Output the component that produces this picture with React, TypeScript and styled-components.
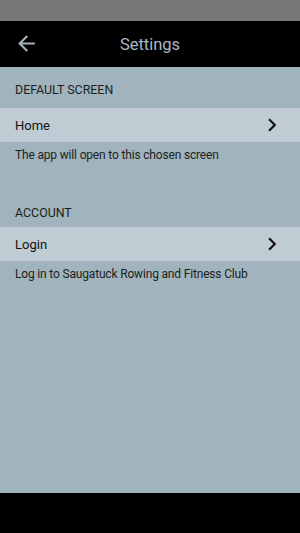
import React from "react";
import styled, { createGlobalStyle } from "styled-components";

const Global = createGlobalStyle`
  html, body { margin: 0; padding: 0; }
  body { font-family: Roboto, "Noto Sans", sans-serif; }
  * { box-sizing: border-box; }
`;

const Screen = styled.div`
  display: flex;
  flex-direction: column;
  height: 533px;
  width: 300px;
  background: #a1b3bc;
`;

const StatusBar = styled.div`
  height: 21px;
  background: #777777;
  flex-shrink: 0;
`;

const Header = styled.header`
  height: 46px;
  background: #000;
  display: flex;
  align-items: center;
  position: relative;
  flex-shrink: 0;
`;

const BackButton = styled.button`
  background: none;
  border: none;
  padding: 0;
  margin-left: 14px;
  margin-top: -2px;
  width: 25px;
  height: 25px;
  display: flex;
  align-items: center;
  justify-content: center;
  cursor: pointer;
  position: relative;
  z-index: 1;
`;

const Title = styled.h1`
  position: absolute;
  left: 0;
  right: 0;
  text-align: center;
  margin: 0;
  font-size: 16.5px;
  font-weight: 400;
  color: #a9b9c2;
  pointer-events: none;
`;

const Content = styled.main`
  flex: 1;
  display: flex;
  flex-direction: column;
`;

const SectionHeader = styled.div<{ $bottom: number }>`
  padding: 16px 15px ${(p) => p.$bottom}px;
  line-height: 14px;
  font-size: 12.4px;
  color: #1c1f21;
`;

const Row = styled.div`
  height: 34px;
  background: #bfccd3;
  display: flex;
  align-items: center;
  justify-content: space-between;
  padding: 0 15px 0 15px;
  font-size: 13px;
  color: #111;
`;

const Description = styled.div<{ $height: number }>`
  height: ${(p) => p.$height}px;
  padding: 5px 15px 0;
  font-size: 12px;
  letter-spacing: -0.17px;
  line-height: 16px;
  color: #1c1f21;
`;

const BottomBar = styled.div`
  height: 40px;
  background: #000;
  flex-shrink: 0;
`;

const Chevron = () => (
  <svg width="26" height="26" viewBox="0 0 24 24">
    <path d="M10 6L8.59 7.41 13.17 12l-4.58 4.59L10 18l6-6z" fill="#111" />
  </svg>
);

const BackArrow = () => (
  <svg width="25" height="25" viewBox="0 0 24 24">
    <path
      d="M20 11H7.83l5.59-5.59L12 4l-8 8 8 8 1.41-1.41L7.83 13H20v-2z"
      fill="#a1b3bc"
    />
  </svg>
);

const sections = [
  { title: "DEFAULT SCREEN", value: "Home", desc: "The app will open to this chosen screen", bottom: 11, descHeight: 47.5 },
  { title: "ACCOUNT", value: "Login", desc: "Log in to Saugatuck Rowing and Fitness Club", bottom: 7.5, descHeight: 44 },
];

export default function App() {
  return (
    <>
      <Global />
      <Screen>
        <StatusBar />
        <Header>
          <BackButton aria-label="Back">
            <BackArrow />
          </BackButton>
          <Title>Settings</Title>
        </Header>
        <Content>
          {sections.map((s) => (
            <section key={s.title}>
              <SectionHeader $bottom={s.bottom}>{s.title}</SectionHeader>
              <Row>
                <span>{s.value}</span>
                <Chevron />
              </Row>
              <Description $height={s.descHeight}>{s.desc}</Description>
            </section>
          ))}
        </Content>
        <BottomBar />
      </Screen>
    </>
  );
}
